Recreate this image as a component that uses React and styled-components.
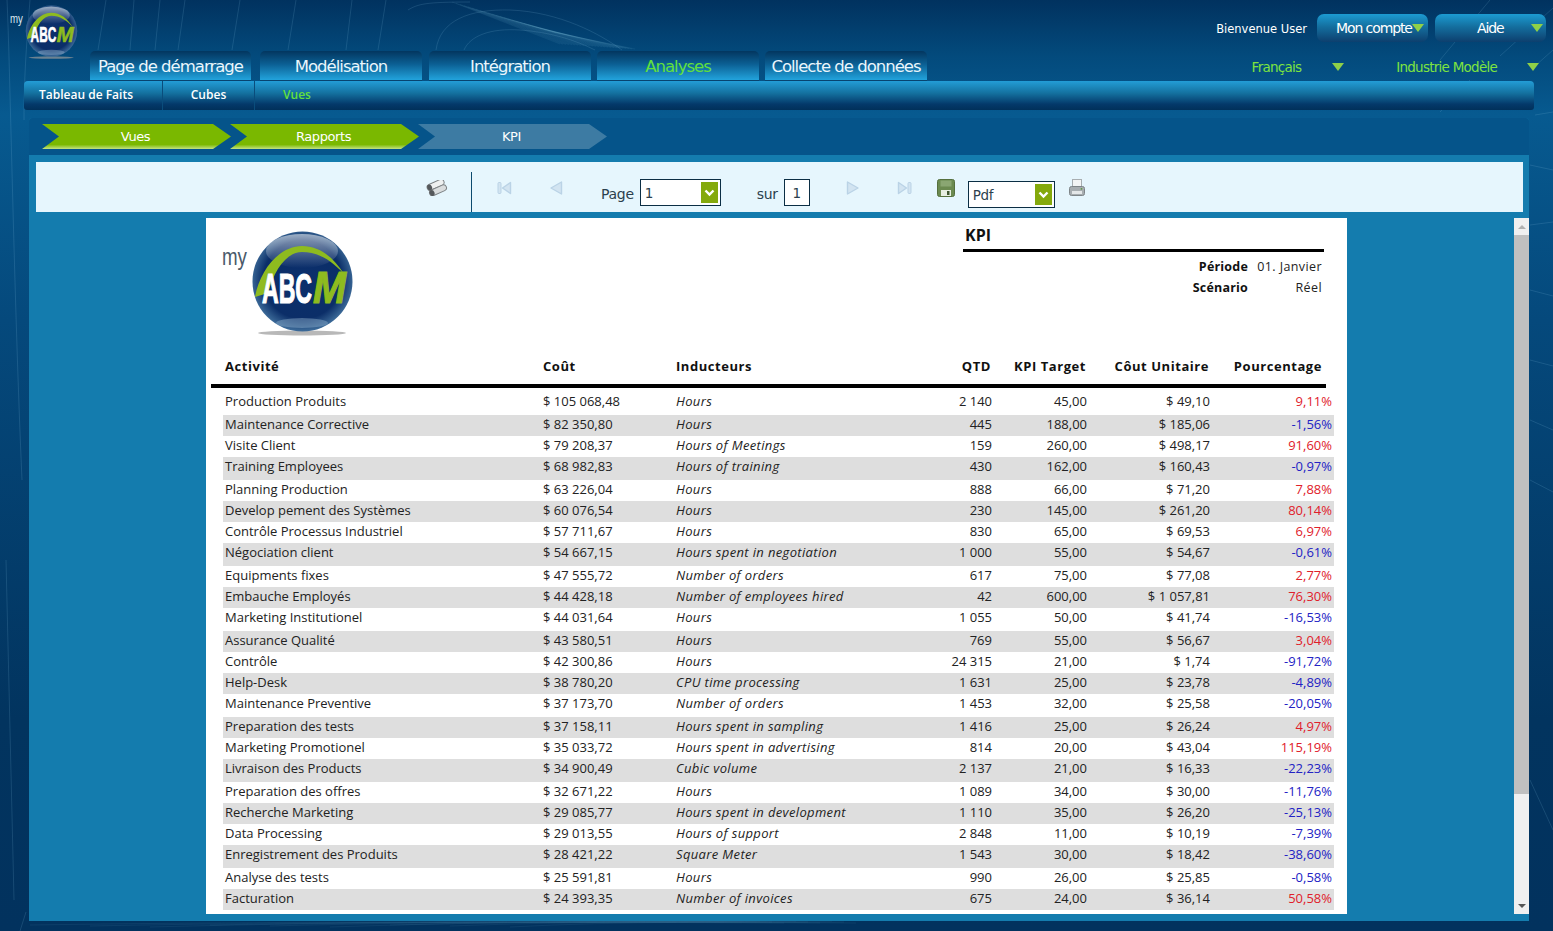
import styled, { createGlobalStyle } from 'styled-components';

const GlobalStyle = createGlobalStyle`
	html, body {
		margin: 0;
		padding: 0;
		background: #02325e;
	}
	* {
		box-sizing: border-box;
	}
`;

const UI_FONT = `'DejaVu Sans', 'Noto Sans', sans-serif`;
const REPORT_FONT = `'Open Sans', 'Noto Sans', sans-serif`;

const ROWS = [
	['Production Produits', '$ 105 068,48', 'Hours', '2 140', '45,00', '$ 49,10', '9,11%', 1],
	['Maintenance Corrective', '$ 82 350,80', 'Hours', '445', '188,00', '$ 185,06', '-1,56%', 0],
	['Visite Client', '$ 79 208,37', 'Hours of Meetings', '159', '260,00', '$ 498,17', '91,60%', 0],
	['Training Employees', '$ 68 982,83', 'Hours of training', '430', '162,00', '$ 160,43', '-0,97%', 1],
	['Planning Production', '$ 63 226,04', 'Hours', '888', '66,00', '$ 71,20', '7,88%', 0],
	['Develop pement des Systèmes', '$ 60 076,54', 'Hours', '230', '145,00', '$ 261,20', '80,14%', 0],
	['Contrôle Processus Industriel', '$ 57 711,67', 'Hours', '830', '65,00', '$ 69,53', '6,97%', 0],
	['Négociation client', '$ 54 667,15', 'Hours spent in negotiation', '1 000', '55,00', '$ 54,67', '-0,61%', 1],
	['Equipments fixes', '$ 47 555,72', 'Number of orders', '617', '75,00', '$ 77,08', '2,77%', 0],
	['Embauche Employés', '$ 44 428,18', 'Number of employees hired', '42', '600,00', '$ 1 057,81', '76,30%', 0],
	['Marketing Institutionel', '$ 44 031,64', 'Hours', '1 055', '50,00', '$ 41,74', '-16,53%', 1],
	['Assurance Qualité', '$ 43 580,51', 'Hours', '769', '55,00', '$ 56,67', '3,04%', 0],
	['Contrôle', '$ 42 300,86', 'Hours', '24 315', '21,00', '$ 1,74', '-91,72%', 0],
	['Help-Desk', '$ 38 780,20', 'CPU time processing', '1 631', '25,00', '$ 23,78', '-4,89%', 0],
	['Maintenance Preventive', '$ 37 173,70', 'Number of orders', '1 453', '32,00', '$ 25,58', '-20,05%', 1],
	['Preparation des tests', '$ 37 158,11', 'Hours spent in sampling', '1 416', '25,00', '$ 26,24', '4,97%', 0],
	['Marketing Promotionel', '$ 35 033,72', 'Hours spent in advertising', '814', '20,00', '$ 43,04', '115,19%', 0],
	['Livraison des Products', '$ 34 900,49', 'Cubic volume', '2 137', '21,00', '$ 16,33', '-22,23%', 1],
	['Preparation des offres', '$ 32 671,22', 'Hours', '1 089', '34,00', '$ 30,00', '-11,76%', 0],
	['Recherche Marketing', '$ 29 085,77', 'Hours spent in development', '1 110', '35,00', '$ 26,20', '-25,13%', 0],
	['Data Processing', '$ 29 013,55', 'Hours of support', '2 848', '11,00', '$ 10,19', '-7,39%', 0],
	['Enregistrement des Produits', '$ 28 421,22', 'Square Meter', '1 543', '30,00', '$ 18,42', '-38,60%', 1],
	['Analyse des tests', '$ 25 591,81', 'Hours', '990', '26,00', '$ 25,85', '-0,58%', 0],
	['Facturation', '$ 24 393,35', 'Number of invoices', '675', '24,00', '$ 36,14', '50,58%', 0],
];

const Page = styled.div`
	position: relative;
	width: 1553px;
	height: 931px;
	overflow: hidden;
	font-family: ${UI_FONT};
	background: linear-gradient(180deg, #01325f 0, #034a7c 55px, #075a90 115px, #05497c 320px, #02345f 720px, #02325e 100%);
`;

const Backdrop = styled.svg`
	position: absolute;
	inset: 0;
	pointer-events: none;
`;

const Content = styled.div`
	position: relative;
`;

const TopRow = styled.div`
	display: flex;
	justify-content: space-between;
	height: 51px;
`;

const LogoSlot = styled.div`
	margin: 5px 0 0 10px;
	height: 53px;
	position: relative;
	z-index: 1;
`;

const UserArea = styled.div`
	display: flex;
	align-items: flex-start;
	gap: 7px;
	padding: 14px 7px 0 0;
`;

const Welcome = styled.span`
	margin: 8px 3px 0 0;
	font-size: 11.5px;
	line-height: 14px;
	color: #fff;
`;

const AccountButton = styled.div`
	display: flex;
	align-items: center;
	width: 111px;
	height: 28px;
	padding: 0 3px 0 19px;
	border-radius: 7px;
	background: linear-gradient(180deg, #1c9bd2 0, #146f9f 45%, #0d3f6e 100%);
	color: #fff;
	font-size: 14px;
	letter-spacing: -1.1px;
	white-space: nowrap;
	justify-content: ${(p) => (p.$center ? 'space-between' : 'flex-start')};
	& > span {
		margin-left: ${(p) => (p.$center ? '23px' : '0')};
	}
`;

const DownArrow = styled.i`
	display: block;
	flex: none;
	width: 0;
	height: 0;
	margin-left: ${(p) => p.$gap || 0}px;
	border-left: 6px solid transparent;
	border-right: 6px solid transparent;
	border-top: 8px solid #8fd048;
`;

const NavRow = styled.div`
	display: flex;
	justify-content: space-between;
	height: 30px;
	padding-left: 90px;
`;

const Tabs = styled.div`
	display: flex;
`;

const Tab = styled.div`
	display: flex;
	align-items: center;
	justify-content: center;
	width: ${(p) => p.$width || 162}px;
	height: 30px;
	margin-left: ${(p) => p.$gap || 0}px;
	padding-top: 1px;
	border-radius: 5px 5px 0 0;
	border-bottom: 1px solid #07446f;
	background: linear-gradient(180deg, #03365f 0, #0b5f93 45%, #22a3dc 100%);
	color: ${(p) => (p.$active ? '#62e03c' : '#eaf6fc')};
	font-size: 16.5px;
	letter-spacing: -1px;
	white-space: nowrap;
`;

const Pickers = styled.div`
	display: flex;
	align-items: center;
	padding: 2px 14px 0 0;
	color: #7de43f;
	font-size: 13.5px;
	letter-spacing: -0.75px;
`;

const Picker = styled.span`
	margin-left: ${(p) => p.$gap}px;
`;

const SubNav = styled.div`
	display: flex;
	align-items: center;
	height: 29px;
	margin: 0 19px 0 24px;
	border-radius: 4px 4px 3px 3px;
	background: linear-gradient(180deg, #239dd6 0, #14719f 42%, #04396a 80%, #01305a 100%);
`;

const SubItem = styled.div`
	display: flex;
	align-items: center;
	justify-content: center;
	height: 100%;
	width: ${(p) => p.$width}px;
	padding: 0 ${(p) => p.$shift || 0}px 2px 0;
	border-right: ${(p) => (p.$plain ? 0 : '1px solid #0a4d7c')};
	color: ${(p) => (p.$active ? '#62e03c' : '#fff')};
	font-size: 12px;
	font-weight: 600;
	font-family: ${REPORT_FONT};
`;

const Panel = styled.div`
	display: flex;
	flex-direction: column;
	height: 803px;
	margin: 8px 24px 0 29px;
	border-radius: 3px 3px 0 0;
	background: #147cae;
`;

const Crumbs = styled.div`
	display: flex;
	align-items: center;
	height: 37px;
	flex: none;
	padding-left: 13px;
	border-radius: 3px 3px 0 0;
	background: #05548a;
`;

const Crumb = styled.div`
	display: flex;
	align-items: center;
	justify-content: center;
	width: 189px;
	height: 25px;
	margin-right: -1px;
	padding: 0 2px 1px 0;
	clip-path: polygon(0 0, 171px 0, 100% 50%, 171px 100%, 0 100%, 17px 50%);
	background: ${(p) => (p.$done ? 'linear-gradient(180deg, #7ab800 0, #7ab800 82%, #c3e283 100%)' : '#3d7ba3')};
	color: #fff;
	font-size: 13px;
	letter-spacing: -0.4px;
`;

const Toolbar = styled.div`
	display: flex;
	align-items: center;
	flex: none;
	height: 50px;
	margin: 7px 6px 0 7px;
	padding-left: 390px;
	background: #e6f6fd;
	color: #2b3f4d;
	font-size: 14px;
	letter-spacing: -0.3px;
`;

const ToolIcon = styled.svg`
	flex: none;
	margin-left: ${(p) => p.$gap || 0}px;
	margin-top: ${(p) => p.$top || 0}px;
`;

const ToolDivider = styled.div`
	flex: none;
	align-self: flex-end;
	width: 1px;
	height: 40px;
	margin-left: 23px;
	background: #0c4a6e;
`;

const ToolLabel = styled.span`
	margin: 14px 0 0 ${(p) => p.$gap}px;
`;

const FieldBox = styled.div`
	display: flex;
	align-items: center;
	justify-content: ${(p) => (p.$centered ? 'center' : 'space-between')};
	flex: none;
	width: ${(p) => p.$width}px;
	height: ${(p) => p.$height || 27}px;
	margin: ${(p) => p.$top || 0}px 0 0 ${(p) => p.$gap}px;
	padding: 2px 2px 2px ${(p) => (p.$centered ? 2 : 4)}px;
	border: 1px solid #0b2e44;
	background: #fff;
	font-size: 13.5px;
`;

const FieldArrow = styled.div`
	display: flex;
	align-items: center;
	justify-content: center;
	width: 17px;
	height: 100%;
	background: #84a90c;
`;

const ReportArea = styled.div`
	display: flex;
	justify-content: space-between;
	height: 696px;
	margin-top: 6px;
	padding-left: 177px;
`;

const Report = styled.div`
	width: 1141px;
	height: 100%;
	overflow: hidden;
	background: #fff;
	color: #222;
	font-family: ${REPORT_FONT};
	font-size: 13px;
`;

const ReportHead = styled.div`
	display: flex;
	align-items: flex-start;
	justify-content: space-between;
	height: 136px;
	padding: 13px 23px 0 16px;
`;

const ReportMeta = styled.div`
	width: 361px;
`;

const ReportTitle = styled.div`
	height: 21px;
	padding-left: 2px;
	border-bottom: 3px solid #000;
	box-sizing: content-box;
	margin-top: -3px;
	margin-bottom: 4px;
	font-size: 16px;
	font-weight: 700;
	line-height: 15px;
	color: #111;
`;

const MetaRow = styled.div`
	display: grid;
	grid-template-columns: 285px 74px;
	height: 21px;
	line-height: 21px;
	font-size: 12.5px;
	& > b {
		font-weight: 700;
		text-align: right;
		color: #111;
		letter-spacing: 0.2px;
	}
	& > span {
		text-align: right;
		letter-spacing: 0.4px;
	}
`;

const Grid = styled.div`
	display: grid;
	grid-template-columns: 320px 133px 216px 100px 95px 123px 124px;
	width: 1111px;
	margin-left: 17px;
`;

const HeadRow = styled(Grid)`
	height: 30px;
	align-items: center;
	font-size: 13px;
	font-weight: 700;
	letter-spacing: 0.55px;
	color: #111;
	padding-bottom: 6px;
`;

const Rule = styled.div`
	width: 1115px;
	height: 4px;
	margin: 0 0 4px 5px;
	background: #000;
`;

const DataRow = styled(Grid)`
	height: ${(p) => (p.$tall ? 23 : 21)}px;
	line-height: 18px;
	background: ${(p) => (p.$shaded ? '#dedede' : 'transparent')};
`;

const Cell = styled.div`
	white-space: nowrap;
	padding: ${(p) => (p.$first ? '0 0 0 2px' : 0)};
	text-align: ${(p) => (p.$right ? 'right' : 'left')};
	font-style: ${(p) => (p.$italic ? 'italic' : 'normal')};
`;

const DriverCell = styled(Cell)`
	letter-spacing: 0.35px;
`;

const HeadCell = styled(Cell)`
	padding-right: ${(p) => (p.$last ? 12 : 1)}px;
`;

const PercentCell = styled(Cell)`
	padding-right: 2px;
	color: ${(p) => (p.$negative ? '#2222c4' : '#e0202a')};
`;

const ScrollBar = styled.div`
	display: flex;
	flex-direction: column;
	flex: none;
	width: 15px;
	height: 100%;
	background: #f0f0f0;
`;

const ScrollButton = styled.div`
	display: flex;
	align-items: center;
	justify-content: center;
	flex: none;
	height: 17px;
`;

const ScrollThumb = styled.div`
	flex: none;
	height: 559px;
	background: #c0c0c0;
`;

const ScrollTrack = styled.div`
	flex: 1;
`;

const ScrollTriangle = styled.i`
	display: block;
	width: 0;
	height: 0;
	border-left: 4px solid transparent;
	border-right: 4px solid transparent;
	${(p) => (p.$down ? 'border-top: 4px solid #555;' : 'border-bottom: 4px solid #b0b0b0;')}
`;

const Logo = ({ width, tagColor }) => (
	<svg width={width} viewBox="0 0 132 110" style={{ display: 'block' }}>
		<defs>
			<radialGradient id={`ball${width}`} cx="50%" cy="48%" r="56%">
				<stop offset="0" stopColor="#0b2f6c" />
				<stop offset="0.7" stopColor="#0b2e68" />
				<stop offset="0.92" stopColor="#3c6a98" />
				<stop offset="1" stopColor="#7fa0bd" />
			</radialGradient>
			<linearGradient id={`gloss${width}`} x1="0" y1="0" x2="0" y2="1">
				<stop offset="0" stopColor="#fff" stopOpacity="0.55" />
				<stop offset="1" stopColor="#fff" stopOpacity="0" />
			</linearGradient>
		</defs>
		<ellipse cx="80" cy="102" rx="44" ry="2.5" fill="#9a9a9a" opacity="0.7" />
		<circle cx="80.5" cy="50.5" r="50" fill={`url(#ball${width})`} />
		<ellipse cx="80" cy="20" rx="36" ry="17" fill={`url(#gloss${width})`} />
		<ellipse cx="80" cy="92" rx="26" ry="5" fill="#8fb0cc" opacity="0.45" />
		<path d="M33 66 C38 38 58 15 80 15 C98 15 112 27 122 43 C110 30 97 21 80 21 C64 21 52 40 46 62 Z" fill="#8ebb1f" />
		<text x="40" y="72" fontFamily="'Liberation Sans', sans-serif" fontWeight="700" fontSize="42" fill="#fff" stroke="#fff" strokeWidth="1.2" textLength="50" lengthAdjust="spacingAndGlyphs">
			ABC
		</text>
		<text x="91" y="72" fontFamily="'Liberation Sans', sans-serif" fontWeight="700" fontStyle="italic" fontSize="44" fill="#8ebb1f" stroke="#8ebb1f" strokeWidth="1.2" textLength="33" lengthAdjust="spacingAndGlyphs">
			M
		</text>
		<text x="0" y="34" fontFamily="'Liberation Sans', sans-serif" fontSize="24" fill={tagColor} textLength="25" lengthAdjust="spacingAndGlyphs">
			my
		</text>
	</svg>
);

const Chevron = () => (
	<svg width="11" height="8" viewBox="0 0 11 8">
		<path d="M1.5 1.5 L5.5 5.5 L9.5 1.5" fill="none" stroke="#fff" strokeWidth="2.4" />
	</svg>
);

const Binoculars = () => (
	<ToolIcon $top={2} width="22" height="16" viewBox="0 0 22 16">
		<g transform="rotate(-24 11 8)">
			<rect x="2" y="1.5" width="18" height="6" rx="3" fill="#eef0f0" stroke="#7c8083" />
			<rect x="2" y="7.5" width="18" height="6" rx="3" fill="#d9dcdd" stroke="#7c8083" />
			<ellipse cx="4.5" cy="4.5" rx="2.4" ry="3" fill="#55595c" />
			<ellipse cx="4.5" cy="10.5" rx="2.4" ry="3" fill="#55595c" />
		</g>
	</ToolIcon>
);

const NavIcon = ({ gap, dir, bar }) => (
	<ToolIcon $gap={gap} $top={2} width="15" height="14" viewBox="0 0 15 14" style={dir === 'next' ? { transform: 'scaleX(-1)' } : undefined}>
		{bar && <rect x="1" y="1.5" width="3" height="11" rx="1" fill="#d2e4f1" stroke="#bad3e6" />}
		<path d={bar ? 'M13.5 1.5 L5.5 7 L13.5 12.5 Z' : 'M12.5 1 L2 7 L12.5 13 Z'} fill="#d2e4f1" stroke="#bad3e6" strokeWidth="1.4" strokeLinejoin="round" />
	</ToolIcon>
);

const SaveIcon = () => (
	<ToolIcon $gap={25} $top={2} width="18" height="18" viewBox="0 0 18 18">
		<rect x="0.5" y="0.5" width="17" height="17" rx="2" fill="#6b8a50" stroke="#55703e" />
		<rect x="3.5" y="1.5" width="11" height="6" fill="#8aa672" />
		<rect x="4" y="11" width="10" height="6" fill="#e7efe2" />
		<rect x="10" y="12" width="2.5" height="4" fill="#3f5630" />
	</ToolIcon>
);

const PrintIcon = () => (
	<ToolIcon $gap={14} $top={1} width="16" height="18" viewBox="0 0 16 18">
		<rect x="3.5" y="0.5" width="9" height="8" fill="#f3f5f5" stroke="#a8aeb1" />
		<rect x="0.5" y="7.5" width="15" height="9" rx="2" fill="#a7adb0" stroke="#7e8588" />
		<rect x="3" y="12" width="10" height="3" fill="#e4e7e8" />
		<circle cx="12.5" cy="9.8" r="0.9" fill="#5c9a44" />
	</ToolIcon>
);

const Backlines = () => (
	<Backdrop width="1553" height="931" viewBox="0 0 1553 931" fill="none" stroke="#8fc6e6">
		<g strokeOpacity="0.16">
			<path d="M7 0 C10 60 14 300 22 480" />
			<path d="M30 0 C26 50 24 80 24 120" />
			<path d="M106 0 L98 50" />
			<path d="M134 0 L130 50" />
			<path d="M160 0 L155 50" />
			<path d="M185 0 L178 50" />
			<path d="M240 0 L232 50" />
			<path d="M296 0 L288 50" />
			<path d="M352 0 L346 50" />
			<path d="M386 0 L378 50" />
			<path d="M408 10 C418 4 425 2 470 2" />
			<path d="M436 50 C440 20 470 9 510 10 C560 12 600 34 622 50" />
			<path d="M464 50 C470 36 490 28 520 30 C550 32 575 40 595 50" />
			<path d="M1490 0 L1440 60" />
			<path d="M1553 8 L1500 56" />
			<path d="M1553 50 L1535 66" />
			<path d="M1470 80 L1440 112" />
			<path d="M1535 115 L1553 112" />
			<path d="M1530 165 L1553 170" />
			<path d="M1530 225 L1553 222" />
			<path d="M1530 290 L1553 296" />
			<path d="M1530 360 L1553 366" />
			<path d="M1530 420 L1553 430" />
			<path d="M1530 480 L1553 492" />
			<path d="M1530 780 L1553 830" />
			<path d="M6 560 L14 900" />
			<path d="M26 912 L20 931" />
		</g>
		<g strokeOpacity="0.08">
			{Array.from({ length: 26 }, (_, i) => (
				<path key={i} d={`M${452 + i * 4} ${2 + i * 1.2} L${560 + i * 3} ${44 + i * 0.2}`} />
			))}
			{Array.from({ length: 9 }, (_, i) => (
				<path key={i} d={`M${30 + i * 60} ${925 + (i % 3)} C${300 + i * 40} 921 ${500 + i * 30} 922 ${760 + i * 12} ${921 + (i % 3)}`} />
			))}
		</g>
	</Backdrop>
);

export default function App() {
	return (
		<Page>
			<GlobalStyle />
			<Backlines />
			<Content>
				<TopRow>
					<LogoSlot>
						<Logo width={68} tagColor="#d8e6ef" />
					</LogoSlot>
					<UserArea>
						<Welcome>Bienvenue User</Welcome>
						<AccountButton>
							<span>Mon compte</span>
							<DownArrow />
						</AccountButton>
						<AccountButton $center>
							<span>Aide</span>
							<DownArrow />
						</AccountButton>
					</UserArea>
				</TopRow>

				<NavRow>
					<Tabs>
						<Tab $width={161}>Page de démarrage</Tab>
						<Tab $gap={9}>Modélisation</Tab>
						<Tab $gap={7}>Intégration</Tab>
						<Tab $gap={6} $active>
							Analyses
						</Tab>
						<Tab $gap={6}>Collecte de données</Tab>
					</Tabs>
					<Pickers>
						<Picker $gap={0}>Français</Picker>
						<DownArrow $gap={31} />
						<Picker $gap={52}>Industrie Modèle</Picker>
						<DownArrow $gap={30} />
					</Pickers>
				</NavRow>

				<SubNav>
					<SubItem $width={139} $shift={14}>
						Tableau de Faits
					</SubItem>
					<SubItem $width={92}>Cubes</SubItem>
					<SubItem $width={84} $plain $active>
						Vues
					</SubItem>
				</SubNav>

				<Panel>
					<Crumbs>
						<Crumb $done>Vues</Crumb>
						<Crumb $done>Rapports</Crumb>
						<Crumb>KPI</Crumb>
					</Crumbs>

					<Toolbar>
						<Binoculars />
						<ToolDivider />
						<NavIcon gap={25} dir="prev" bar />
						<NavIcon gap={37} dir="prev" />
						<ToolLabel $gap={37}>Page</ToolLabel>
						<FieldBox $gap={6} $width={81} $top={11}>
							1
							<FieldArrow>
								<Chevron />
							</FieldArrow>
						</FieldBox>
						<ToolLabel $gap={36}>sur</ToolLabel>
						<FieldBox $gap={6} $width={26} $top={11} $centered>
							1
						</FieldBox>
						<NavIcon gap={35} dir="next" />
						<NavIcon gap={37} dir="next" bar />
						<SaveIcon />
						<FieldBox $gap={13} $width={87} $top={15}>
							Pdf
							<FieldArrow>
								<Chevron />
							</FieldArrow>
						</FieldBox>
						<PrintIcon />
					</Toolbar>

					<ReportArea>
						<Report>
							<ReportHead>
								<Logo width={132} tagColor="#4a5a6a" />
								<ReportMeta>
									<ReportTitle>KPI</ReportTitle>
									<MetaRow>
										<b>Période</b>
										<span>01. Janvier</span>
									</MetaRow>
									<MetaRow>
										<b>Scénario</b>
										<span>Réel</span>
									</MetaRow>
								</ReportMeta>
							</ReportHead>

							<HeadRow>
								<HeadCell $first>Activité</HeadCell>
								<HeadCell>Coût</HeadCell>
								<HeadCell>Inducteurs</HeadCell>
								<HeadCell $right>QTD</HeadCell>
								<HeadCell $right>KPI Target</HeadCell>
								<HeadCell $right>Côut Unitaire</HeadCell>
								<HeadCell $right $last>
									Pourcentage
								</HeadCell>
							</HeadRow>
							<Rule />

							{ROWS.map(([name, cost, driver, qtd, target, unit, percent, tall], index) => (
								<DataRow key={name} $tall={tall} $shaded={index % 2 === 1}>
									<Cell $first>{name}</Cell>
									<Cell>{cost}</Cell>
									<DriverCell $italic>{driver}</DriverCell>
									<Cell $right>{qtd}</Cell>
									<Cell $right>{target}</Cell>
									<Cell $right>{unit}</Cell>
									<PercentCell $right $negative={percent.startsWith('-')}>
										{percent}
									</PercentCell>
								</DataRow>
							))}
						</Report>

						<ScrollBar>
							<ScrollButton>
								<ScrollTriangle />
							</ScrollButton>
							<ScrollThumb />
							<ScrollTrack />
							<ScrollButton>
								<ScrollTriangle $down />
							</ScrollButton>
						</ScrollBar>
					</ReportArea>
				</Panel>
			</Content>
		</Page>
	);
}
